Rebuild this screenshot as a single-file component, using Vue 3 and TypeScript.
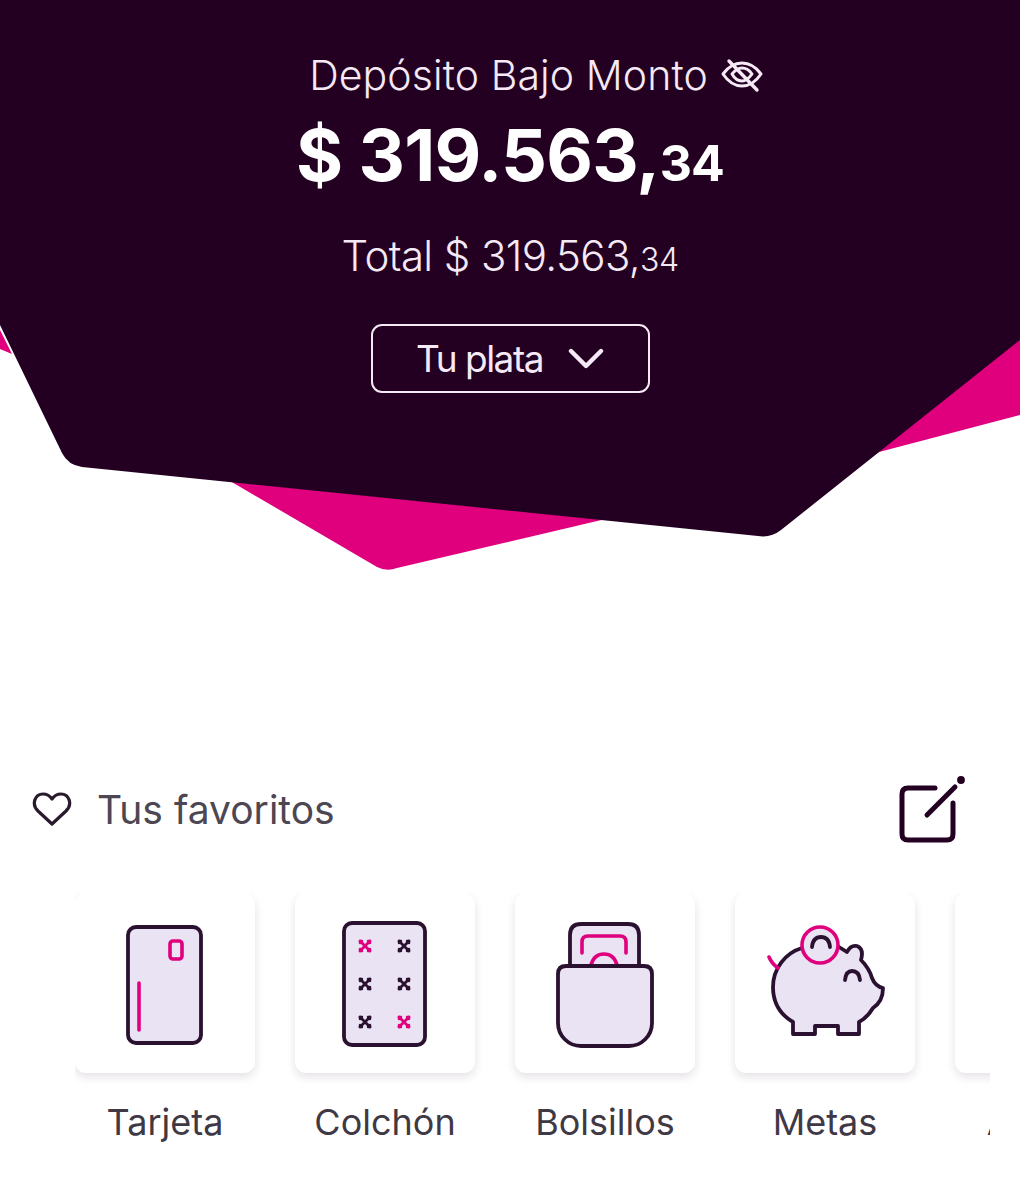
<script setup lang="ts">
interface Favorite {
  id: string;
  label: string;
}

const favorites: Favorite[] = [
  { id: 'card', label: 'Tarjeta' },
  { id: 'mattress', label: 'Colchón' },
  { id: 'pockets', label: 'Bolsillos' },
  { id: 'goals', label: 'Metas' },
  { id: 'more', label: 'Ahorro' },
];

const dots = [
  { x: 70, y: 53, pink: true },
  { x: 109, y: 53, pink: false },
  { x: 70, y: 91, pink: false },
  { x: 109, y: 91, pink: false },
  { x: 70, y: 129, pink: false },
  { x: 109, y: 129, pink: true },
];
</script>

<template>
  <div class="page">
    <section class="hero">
      <svg class="hero-bg" viewBox="0 0 1020 575" width="1020" height="575" aria-hidden="true">
        <path class="pink" d="M0 330 L12 354 L0 349 Z" />
        <path class="pink" d="M1020 338 V415 L860 457 L850 420 Z" />
        <path class="pink" d="M225 478 L377 567 Q387 572 397 568 L610 518 Z" />
        <path class="dark" d="M0 0 H1020 V340 L781 530 Q771 538 758 536 L82 467 Q68 465 62 453 L0 325 Z" />
      </svg>

      <div class="hero-content">
        <div class="title-row">
          <span>Depósito Bajo Monto</span>
          <svg viewBox="0 0 42 36" width="42" height="36" fill="none" stroke="currentColor" stroke-width="3" stroke-linecap="round" stroke-linejoin="round">
            <path d="M2 17 Q10 6 21 6 Q32 6 40 17 Q32 29 21 29 Q10 29 2 17 Z" />
            <path d="M11 17 Q16 11 21 11 Q27 11 31 17 Q26 24 21 24 Q15 24 11 17 Z" />
            <path d="M8 4 L36 33" stroke-width="3.4" />
          </svg>
        </div>
        <div class="amount">$ 319.563,<small>34</small></div>
        <div class="total">Total $ 319.563,<small>34</small></div>
        <button class="money-btn">
          <span>Tu plata</span>
          <svg viewBox="0 0 36 22" width="36" height="22" fill="none" stroke="currentColor" stroke-width="4.4" stroke-linecap="round" stroke-linejoin="round">
            <path d="M3 3 L18 18 L33 3" />
          </svg>
        </button>
      </div>
    </section>

    <section class="favorites">
      <header class="fav-header">
        <div class="fav-title">
          <svg viewBox="0 0 40 36" width="40" height="36" fill="none" stroke="#2a1a2e" stroke-width="3.2" stroke-linejoin="round">
            <path d="M20 33 L6 20 C-1 13 3 3 11 3 C15 3 18 5 20 8 C22 5 25 3 29 3 C37 3 41 13 34 20 Z" />
          </svg>
          <span>Tus favoritos</span>
        </div>
        <svg class="edit-icon" viewBox="0 0 70 70" width="70" height="70" fill="none" stroke="#230022" stroke-width="5" stroke-linecap="round" stroke-linejoin="round">
          <path d="M37 14 H10 Q4 14 4 20 V60 Q4 66 10 66 H49 Q55 66 55 60 V29" />
          <path d="M29 41 L57 13" />
          <circle cx="63" cy="6" r="1.4" fill="#230022" />
        </svg>
      </header>

      <div class="fav-list">
        <div v-for="fav in favorites" :key="fav.id" class="fav-item">
          <div class="fav-card">
            <svg viewBox="0 0 180 180" width="180" height="180" fill="none" stroke-linecap="round" stroke-linejoin="round">
              <template v-if="fav.id === 'card'">
                <rect class="fill line" x="53" y="34" width="73" height="116" rx="8" />
                <rect class="accent" x="95" y="48" width="12" height="18" rx="3" />
                <path class="accent" d="M64 90 V137" />
              </template>

              <template v-else-if="fav.id === 'mattress'">
                <rect class="fill line" x="49" y="30" width="81" height="122" rx="8" />
                <g v-for="dot in dots" :key="dot.x + '-' + dot.y" :transform="`translate(${dot.x} ${dot.y})`" :class="dot.pink ? 'accent' : 'line'">
                  <path class="petal" d="M-5 -5 L5 5 M5 -5 L-5 5" />
                  <path class="petal-end" d="M-5 -3 V-5 H-3 M3 -5 H5 V-3 M5 3 V5 H3 M-3 5 H-5 V3" />
                </g>
              </template>

              <template v-else-if="fav.id === 'pockets'">
                <path class="fill line" d="M55 73 V42 Q55 31 66 31 H113 Q124 31 124 42 V73" />
                <path class="accent" d="M67 60 V49 Q67 43 73 43 H105 Q111 43 111 49 V60" />
                <path class="accent" d="M76 72 Q79 61 89 61 Q99 61 102 72" />
                <path class="fill line" d="M51 73 H129 Q137 73 137 81 V130 A23 23 0 0 1 114 153 H66 A23 23 0 0 1 43 130 V81 Q43 73 51 73 Z" />
              </template>

              <template v-else-if="fav.id === 'goals'">
                <path class="fill line" d="M67 55 C50 60 38 76 38 94 C38 110 46 122 58 129 V141 H80 V133 H103 V141 H124 V129 C130 126 135 120 138 115 C144 111 148 104 148 95 C143 94 139 90 137 85 C135 78 131 72 126 67 C128 60 127 55 122 53 C117 52 114 55 112 59 L104 54" />
                <circle class="fill accent" cx="85" cy="52" r="18" />
                <path class="line" d="M77 54 Q78 44 86 44 Q94 44 95 54" />
                <path class="line" d="M110 87 Q111 78 117 78 Q124 78 125 87" />
                <path class="accent" d="M34 64 Q37 71 43 75" />
              </template>
            </svg>
          </div>
          <span class="fav-label">{{ fav.label }}</span>
        </div>
      </div>
    </section>
  </div>
</template>

<style scoped>
.page {
  width: 1020px;
  height: 1200px;
  overflow: hidden;
  background: #ffffff;
  font-family: Inter, "Open Sans", sans-serif;
}

.hero {
  position: relative;
  height: 575px;
}

.hero-bg {
  position: absolute;
  inset: 0;
}

.dark {
  fill: #230022;
}

.pink {
  fill: #e0007e;
}

.hero-content {
  position: relative;
  display: flex;
  flex-direction: column;
  align-items: center;
  padding-top: 50px;
  color: #f4e9f5;
}

.title-row {
  display: flex;
  align-items: center;
  gap: 13px;
  height: 50px;
  margin-left: 52px;
  font-size: 41px;
  font-weight: 300;
  letter-spacing: 0.1px;
  white-space: nowrap;
}

.amount {
  margin-top: 18px;
  height: 74px;
  line-height: 74px;
  color: #ffffff;
  font-size: 72px;
  font-weight: 700;
  letter-spacing: -0.8px;
  white-space: nowrap;
}

.amount small {
  font-size: 50px;
}

.total {
  margin-top: 39px;
  height: 50px;
  line-height: 50px;
  font-size: 42px;
  font-weight: 300;
  letter-spacing: -0.6px;
  white-space: nowrap;
}

.total small {
  font-size: 32px;
}

.money-btn {
  display: flex;
  align-items: center;
  justify-content: center;
  gap: 25px;
  box-sizing: border-box;
  width: 279px;
  height: 69px;
  margin-top: 43px;
  background: transparent;
  border: 2px solid #f4e9f5;
  border-radius: 11px;
  color: #f4e9f5;
  font-family: inherit;
  font-size: 37px;
  font-weight: 400;
  letter-spacing: -1.5px;
}

.favorites {
  margin-top: 199px;
}

.fav-header {
  display: flex;
  align-items: center;
  justify-content: space-between;
  height: 70px;
  padding: 0 52px 0 32px;
}

.fav-title {
  display: flex;
  align-items: center;
  gap: 25px;
  color: #4d4653;
  font-size: 39px;
  font-weight: 400;
}

.fav-list {
  display: flex;
  gap: 40px;
  width: 915px;
  margin-top: 49px;
  margin-left: 75px;
  overflow: hidden;
  padding-bottom: 20px;
}

.fav-item {
  display: flex;
  flex-direction: column;
  align-items: center;
  flex: 0 0 180px;
}

.fav-card {
  width: 180px;
  height: 180px;
  background: #ffffff;
  border-radius: 11px;
  box-shadow: 0 4px 10px rgba(40, 10, 40, 0.12);
}

.fav-label {
  margin-top: 26px;
  height: 46px;
  line-height: 46px;
  color: #3f3845;
  font-size: 36px;
  white-space: nowrap;
}

.fill {
  fill: #e9e3f3;
}

.line {
  stroke: #2a1130;
  stroke-width: 3.8;
}

.accent {
  stroke: #e0007e;
  stroke-width: 3.6;
}

.petal {
  stroke-width: 2.8;
}

.petal-end {
  stroke-width: 2.4;
}
</style>

<style>
html,
body {
  margin: 0;
  background: #ffffff;
}
</style>
